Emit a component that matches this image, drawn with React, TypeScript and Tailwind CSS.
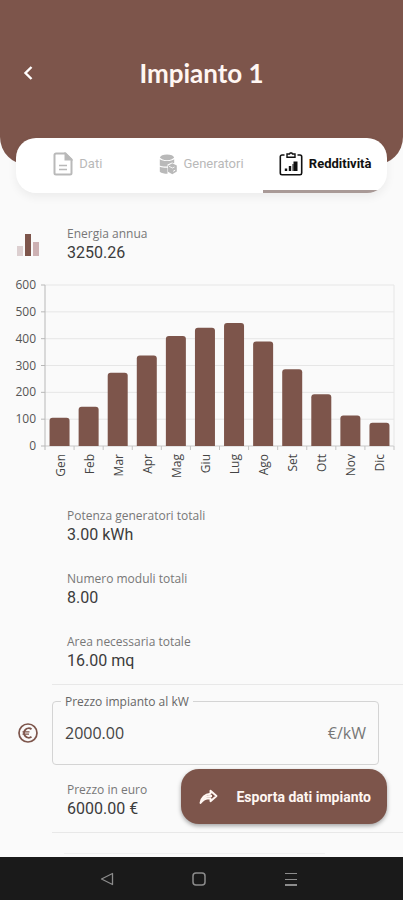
import React, { useState } from 'react';

type TabId = 'dati' | 'generatori' | 'redditivita';

const monthly = [
  { label: 'Gen', value: 105 },
  { label: 'Feb', value: 146 },
  { label: 'Mar', value: 273 },
  { label: 'Apr', value: 337 },
  { label: 'Mag', value: 410 },
  { label: 'Giu', value: 441 },
  { label: 'Lug', value: 458 },
  { label: 'Ago', value: 389 },
  { label: 'Set', value: 286 },
  { label: 'Ott', value: 193 },
  { label: 'Nov', value: 114 },
  { label: 'Dic', value: 87 },
];

const totals = [
  { label: 'Potenza generatori totali', value: '3.00 kWh' },
  { label: 'Numero moduli totali', value: '8.00' },
  { label: 'Area necessaria totale', value: '16.00 mq' },
];

const DocumentIcon = () => (
  <svg width="20" height="24" viewBox="0 0 20 24" fill="none" stroke="currentColor" strokeWidth="2">
    <path d="M3 1.5h9.5L18.5 7.5V21a1.5 1.5 0 0 1-1.5 1.5H3A1.5 1.5 0 0 1 1.500 21V3A1.500 1.500 0 0 1 3 1.500Z" />
    <path d="M12.500 2v5.500H18Z" fill="currentColor" />
    <path d="M6 13.500h8M6 17.500h8" strokeWidth="1.600" />
  </svg>
);

const GeneratorIcon = () => (
  <svg width="18" height="21" viewBox="0 0 18 21" fill="currentColor">
    <ellipse cx="8" cy="3.300" rx="6.800" ry="2.900" />
    <path d="M.8 5.300c2.500 2.400 12 2.400 14.400 0v3.900l-2.200-.8-4.500 2.200v1.900c-3 .3-6.300-.1-7.700-1Z" />
    <path d="M.8 12.700c2 .9 5 1.200 7.700 1.100v5.900c-3 0-6.200-.6-7.700-2Z" />
    <path d="M13.300 9.300 17.800 11.600v5.900l-4.500 2.700-4.300-2.400v-6.100Z" />
    <path d="m10 12.300 3.500 1.700 2 -1" fill="none" stroke="#fff" strokeWidth=".8" />
    <path d="m14.200 17.300 2-1.100" fill="none" stroke="#fff" strokeWidth="1" />
  </svg>
);

const ReportIcon = () => (
  <svg width="24" height="24" viewBox="0 0 24 24" fill="none" stroke="currentColor" strokeWidth="1.600">
    <path d="M5.500 3H3A1.700 1.700 0 0 0 1.300 4.700V21A1.700 1.700 0 0 0 3 22.700h18a1.700 1.700 0 0 0 1.700-1.700V4.700A1.700 1.700 0 0 0 21 3h-2.500" />
    <path d="M8 5.200V2h2.500L11.200 1h1.600l.7 1H16v3.200Z" strokeWidth="1.400" />
    <path d="M7 19v-2.500M11 19v-5" strokeWidth="2.400" />
    <path d="M16.500 19V9.500" strokeWidth="4" />
    <path d="M14 19v-7" strokeWidth="1" />
  </svg>
);

const BarsIcon = () => (
  <svg width="22" height="22" viewBox="0 0 22 22">
    <rect x="0" y="12" width="6" height="10" fill="#dccfd0" />
    <rect x="16" y="8" width="6" height="14" fill="#cdb1b3" />
    <rect x="8" y="0" width="6" height="22" fill="#7d554b" />
  </svg>
);

const EuroIcon = () => (
  <svg width="20" height="20" viewBox="0 0 20 20" fill="none" stroke="#7d554b">
    <circle cx="10" cy="10" r="9" strokeWidth="1.700" />
    <path d="M13.500 6.200A4.700 4.700 0 1 0 13.500 13.800" strokeWidth="1.900" />
    <path d="M4.500 8.900h7M4.500 11.200h6.500" strokeWidth="1.300" />
  </svg>
);

const ShareIcon = () => (
  <svg width="19" height="16" viewBox="0 0 19 16" fill="none" stroke="currentColor" strokeWidth="1.900" strokeLinejoin="round">
    <path d="M11.500 1.800 17.500 7l-6 5.200V9.300C7 9 4 10.500 1.500 14 2.500 8.500 6 5.200 11.500 4.700Z" />
    <path d="M4 10.200C6 7.500 9 6.800 13 7" />
  </svg>
);

const EnergyChart = () => {
  const left = 45;
  const right = 394;
  const base = 170;
  const height = 161;
  const step = (right - left) / monthly.length;

  return (
    <svg viewBox="0 0 403 219" className="block w-full font-['Open_Sans','Noto_Sans',sans-serif]" role="img" aria-label="Energia annua">
      {[0, 100, 200, 300, 400, 500, 600].map((tick) => {
        const y = base - (tick / 600) * height;
        return (
          <g key={tick}>
            <line x1={left} x2={right} y1={y} y2={y} stroke={tick === 0 ? '#c9c9c9' : '#e6e6e6'} />
            <line x1={left - 4} x2={left} y1={y} y2={y} stroke="#b8b8b8" />
            <text x="36" y={y + 4} textAnchor="end" fontSize="12" fill="#555">{tick}</text>
          </g>
        );
      })}
      <line x1={right} x2={right} y1={base - height} y2={base} stroke="#e6e6e6" />
      <line x1={left} x2={left} y1={base - height} y2={base + 4} stroke="#b8b8b8" />
      {monthly.map((m, i) => {
        const center = left + step * (i + 0.5);
        const top = base - (m.value / 600) * height;
        return (
          <g key={m.label}>
            <line x1={left + step * (i + 1)} x2={left + step * (i + 1)} y1={base} y2={base + 4} stroke="#c4c4c4" />
            <path
              d={`M${center - 10} ${base}V${top + 3}q0 -3 3 -3h14q3 0 3 3V${base}Z`}
              fill="#7d554b"
            />
            <text
              transform={`translate(${center + 5} ${base + 8}) rotate(-90)`}
              textAnchor="end"
              fontSize="12"
              fill="#444"
            >
              {m.label}
            </text>
          </g>
        );
      })}
    </svg>
  );
};

const InfoRow: React.FC<{ label: string; value: string; icon?: React.ReactNode }> = ({ label, value, icon }) => (
  <div className="flex items-center pt-[13px] pb-3">
    <div className="flex w-[67px] shrink-0 pl-[17px]">{icon}</div>
    <dl>
      <dt className="font-['Open_Sans','Noto_Sans',sans-serif] text-xs leading-4 text-[#777]">{label}</dt>
      <dd className="text-base leading-[22px] text-[#3c3c3c]">{value}</dd>
    </dl>
  </div>
);

const tabs: { id: TabId; label: string; icon: React.ReactNode }[] = [
  { id: 'dati', label: 'Dati', icon: <DocumentIcon /> },
  { id: 'generatori', label: 'Generatori', icon: <GeneratorIcon /> },
  { id: 'redditivita', label: 'Redditività', icon: <ReportIcon /> },
];

export default function App() {
  const [activeTab, setActiveTab] = useState<TabId>('redditivita');
  const [price, setPrice] = useState('2000.00');

  return (
    <div className="flex h-screen flex-col bg-[#fafafa] font-[Roboto,sans-serif]">
      {/* Header */}
      <header className="shrink-0 rounded-b-[28px] bg-[#7d554b] pt-[49px]">
        <div className="relative flex h-12 items-center justify-center">
          <button aria-label="Indietro" className="absolute left-4 flex size-6 items-center justify-center text-white">
            <svg width="10" height="14" viewBox="0 0 10 14" fill="none" stroke="currentColor" strokeWidth="2.400">
              <path d="M8.500 1 2.500 7l6 6" />
            </svg>
          </button>
          <h1 className="font-[Lato,sans-serif] text-[26px] font-bold text-[#fff6f2]">Impianto 1</h1>
        </div>

        {/* Tabs */}
        <div role="tablist" className="mx-4 mt-[41px] -mb-7 grid h-[55px] grid-cols-3 overflow-hidden rounded-[20px] bg-white shadow-[0_4px_10px_rgba(0,0,0,0.06)]">
          {tabs.map((tab) => (
            <button
              key={tab.id}
              role="tab"
              aria-selected={activeTab === tab.id}
              onClick={() => setActiveTab(tab.id)}
              className={`flex items-center justify-center gap-1.5 border-b-3 text-[13px] ${
                activeTab === tab.id
                  ? 'border-[#a99a97] font-bold text-[#111]'
                  : 'border-transparent text-[#b9b9b9]'
              }`}
            >
              {tab.icon}
              {tab.label}
            </button>
          ))}
        </div>
      </header>

      <div className="relative min-h-0 flex-1">
        <main className="h-full overflow-y-auto pt-12 [scrollbar-width:none]">
          <InfoRow label="Energia annua" value="3250.26" icon={<BarsIcon />} />
          <EnergyChart />
          {totals.map((item) => (
            <InfoRow key={item.label} label={item.label} value={item.value} />
          ))}
          <hr className="ml-[52px] border-[#e8e8e8]" />

          {/* Price per kW */}
          <div className="mt-4 mr-6 flex items-center">
            <div className="flex w-[52px] shrink-0 pl-[18px]">
              <EuroIcon />
            </div>
            <div className="relative flex h-16 min-w-0 flex-1 items-center rounded border border-[#d4d4d4] px-3 font-['Open_Sans','Noto_Sans',sans-serif]">
              <label htmlFor="price" className="absolute -top-2 left-2 bg-[#fafafa] px-1 text-xs leading-4 text-[#666]">
                Prezzo impianto al kW
              </label>
              <input
                id="price"
                type="text"
                value={price}
                onChange={(e) => setPrice(e.target.value)}
                className="w-0 min-w-0 flex-1 bg-transparent text-base text-[#444] outline-none"
              />
              <span className="text-base text-[#777]">€/kW</span>
            </div>
          </div>

          <div className="mt-1">
            <InfoRow label="Prezzo in euro" value="6000.00 €" />
          </div>
          <hr className="ml-[52px] border-[#e8e8e8]" />
          <hr className="mt-5 mr-[78px] ml-16 border-[#f0f0f0]" />
        </main>

        <button className="absolute right-4 bottom-[33px] flex h-[55px] items-center gap-[18px] rounded-[18px] bg-[#7d554b] pr-4 pl-[18px] text-sm font-bold text-[#fff6f2] shadow-[0_2px_4px_rgba(0,0,0,0.35)]">
          <ShareIcon />
          Esporta dati impianto
        </button>
      </div>

      {/* System navigation */}
      <nav className="flex h-[43px] shrink-0 items-center justify-center gap-[78px] bg-[#1a1a1a] pr-1.5 text-[#8c8c8c]">
        <button aria-label="Back">
          <svg width="14" height="14" viewBox="0 0 14 14" fill="none" stroke="currentColor" strokeWidth="1.300" strokeLinejoin="round">
            <path d="M12.500 1.500v11L1.500 7Z" />
          </svg>
        </button>
        <button aria-label="Home">
          <svg width="14" height="14" viewBox="0 0 14 14" fill="none" stroke="currentColor" strokeWidth="1.500">
            <rect x="1" y="1" width="12" height="12" rx="3" />
          </svg>
        </button>
        <button aria-label="Recents">
          <svg width="14" height="14" viewBox="0 0 14 14" fill="none" stroke="currentColor">
            <path d="M1 1.500h12M1 7.500h12" strokeWidth="1.200" />
            <path d="M1 13h12" strokeWidth="2" />
          </svg>
        </button>
      </nav>
    </div>
  );
}
